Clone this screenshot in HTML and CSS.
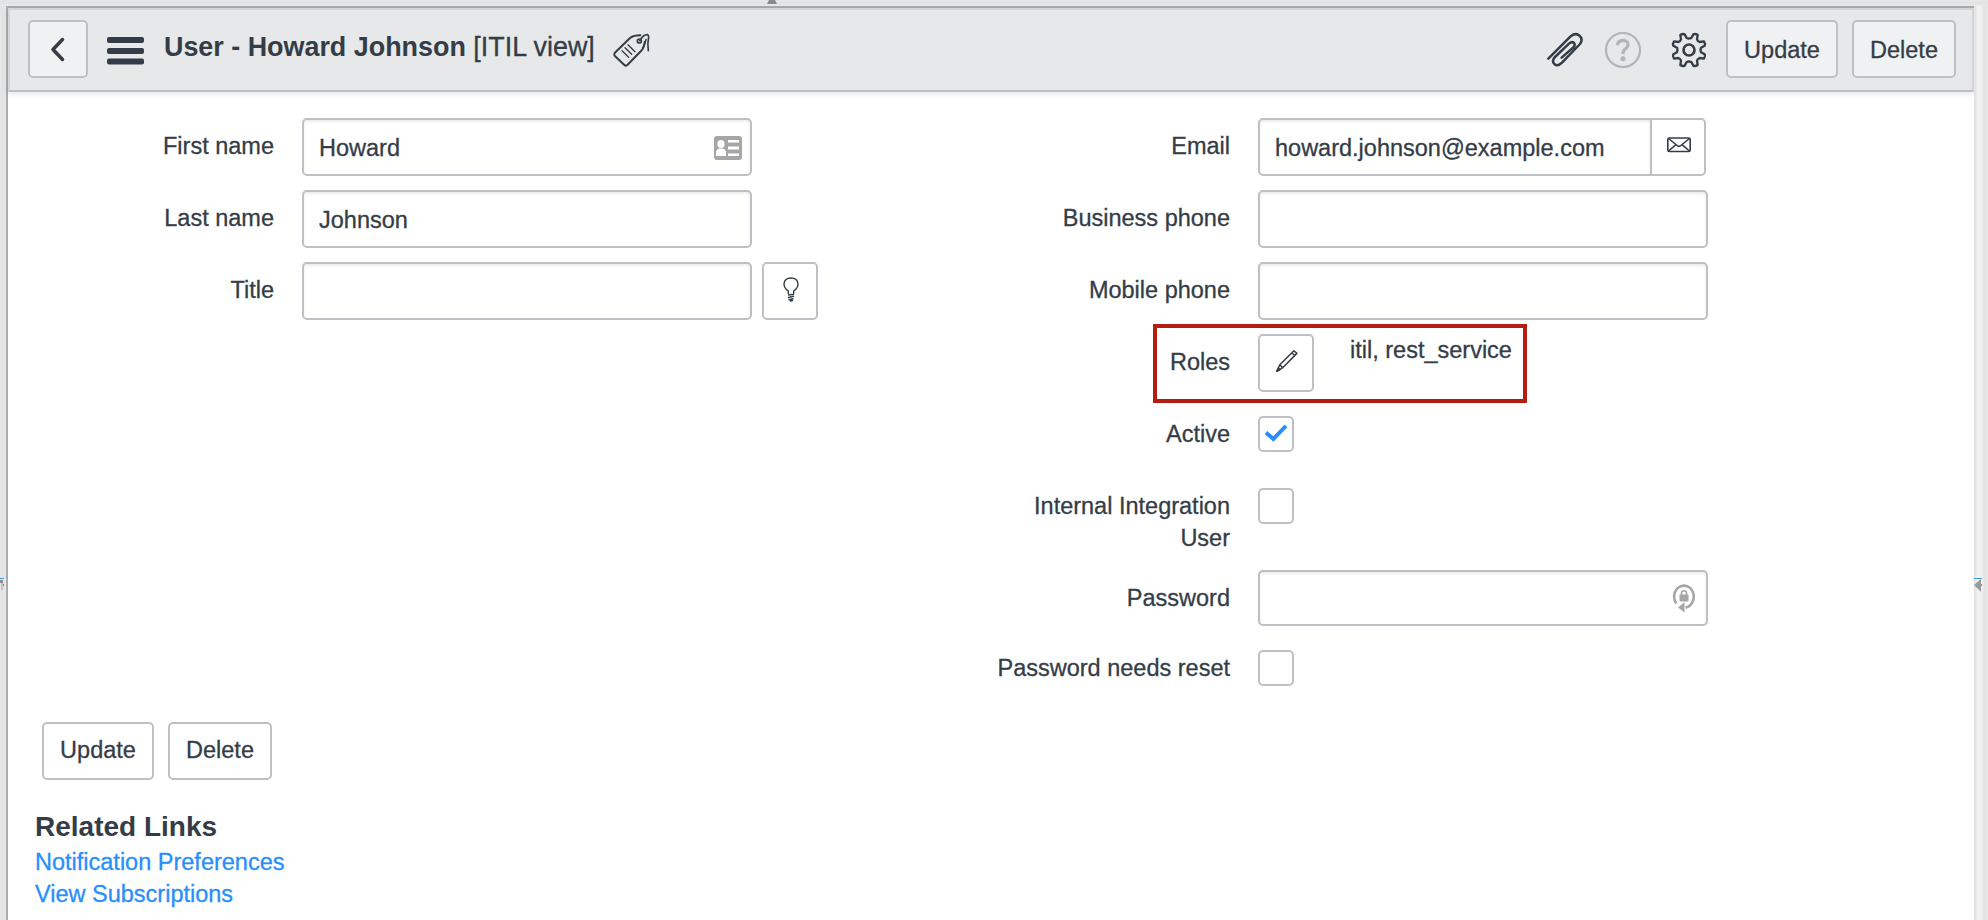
FILE: index.html
```html
<!DOCTYPE html>
<html lang="en">
<head>
<meta charset="utf-8">
<title>User - Howard Johnson</title>
<link rel="stylesheet" href="styles.css">
</head>
<body>
<div class="app">
  <div class="gutter-top"><svg class="handle-top" viewBox="0 0 10 4"><path d="M2 0h6l2 4H0z" fill="#8a8a8a"/></svg></div>
  <div class="middle">
    <div class="gutter-left"><svg class="handle-left" viewBox="0 0 4 14"><path d="M0 0h4v1H0z" fill="#3a9be0"/><path d="M0 2h3v3H0z" fill="#8f8f8f"/><path d="M1 5h2v7H1z" fill="#c2c2c2"/><path d="M3 6h1v2H3z" fill="#3a9be0"/></svg></div>
    <main class="frame">
      <header class="header">
        <button class="btn back" aria-label="Back"><svg width="16" height="26" viewBox="0 0 16 26"><path d="M12.5 3.500L3 13.500l9.500 10" fill="none" stroke="currentColor" stroke-width="3.500" stroke-linecap="round" stroke-linejoin="round"/></svg></button>
        <svg class="menu" width="37" height="28" viewBox="0 0 37 28"><rect width="37" height="6" rx="2"/><rect y="11" width="37" height="6" rx="2"/><rect y="21.500" width="37" height="6" rx="2"/></svg>
        <h1 class="title">User - Howard Johnson <span class="view">[ITIL view]</span></h1>
        <svg class="tag" width="40" height="36" viewBox="640 96 120 108" fill="none" stroke="currentColor" stroke-linecap="round" stroke-linejoin="round">
          <path stroke-width="6" d="M725 106C713 106 702 108 694 114L648 159Q645 163 648 167L677 195Q681 199 686 195L727 153Q736 145 738 126"/>
          <circle cx="722" cy="123" r="6" stroke-width="5"/>
          <path stroke-width="5" d="M723 122C730 111 739 103 746 104C756 107 745 124 748 138L749 152M742 119Q739 132 733 143"/>
          <path stroke-width="4" d="M670 152l20 20M679 143l20 20M688 134l21 21"/>
        </svg>
        <div class="actions">
          <svg class="clip" width="40" height="40" viewBox="135 88 120 120" fill="none" stroke="currentColor" stroke-width="7.500" stroke-linecap="round" stroke-linejoin="round"><path d="M145 174L211 108Q224 95 237 104Q251 115 240 130L186 186Q173 199 163 190Q154 180 165 169L207 129Q216 121 222 127Q227 133 220 140L185 171"/></svg>
          <svg class="help" width="40" height="40" viewBox="308 91 120 120"><circle cx="368" cy="151" r="51" fill="none" stroke="currentColor" stroke-width="6.500"/><path d="M351 137Q353 122 368 122Q384 123 383 136Q382 144 374 149Q368 153 368 163" fill="none" stroke="currentColor" stroke-width="9.500"/><circle cx="368" cy="177" r="7.500" fill="currentColor"/></svg>
          <svg class="gear" width="40" height="40" viewBox="-60 -60 120 120" fill="none" stroke="currentColor" stroke-width="7" stroke-linejoin="round"><circle r="16.500" stroke-width="8"/><path d="M-7 -36Q0 -33 7 -36L13 -47Q19 -50 26 -45L24 -32Q26 -26 32 -24L45 -26Q50 -19 47 -13L36 -7Q33 0 36 7L47 13Q50 19 45 26L32 24Q26 26 24 32L26 45Q19 50 13 47L7 36Q0 33 -7 36L-13 47Q-19 50 -26 45L-24 32Q-26 26 -32 24L-45 26Q-50 19 -47 13L-36 7Q-33 0 -36 -7L-47 -13Q-50 -19 -45 -26L-32 -24Q-26 -26 -24 -32L-26 -45Q-19 -50 -13 -47Z"/></svg>
          <button class="btn update">Update</button>
          <button class="btn delete">Delete</button>
        </div>
      </header>

      <section class="form">
        <div class="column">
          <div class="row"><label class="label">First name</label><div class="field"><input class="input" value="Howard">
            <svg class="input-icon" width="28" height="24" viewBox="0 0 28 24"><rect width="28" height="24" rx="3" fill="#a6a6a6"/><g fill="#fff"><ellipse cx="7" cy="8" rx="3.600" ry="4"/><path d="M2 20v-3q0-3.500 3-4.500h4q3 1 3 4.500v3zM14 4h11v2.500H14zM14 10.500h11v3H14zM14 17.500h11V20H14z"/></g></svg></div></div>
          <div class="row"><label class="label">Last name</label><div class="field"><input class="input" value="Johnson"></div></div>
          <div class="row"><label class="label">Title</label><div class="field"><input class="input"></div>
            <button class="btn square suggest" aria-label="Suggest"><svg width="16" height="25" viewBox="0 0 16 25" fill="none" stroke="currentColor" stroke-width="1.400" stroke-linecap="round" stroke-linejoin="round"><path d="M5.300 16.500V14Q1 11 1 7Q1.500 1 8 1Q14.500 1 15 7Q15 11 10.700 14V16.500M5.500 18l5-.7M5.500 20.500l5-1.200M6 22.700l4-1M7.500 24l2-.5"/></svg></button></div>
        </div>

        <div class="column">
          <div class="row"><label class="label">Email</label><div class="field group"><input class="input" value="howard.johnson@example.com"><button class="addon" aria-label="Send email"><svg width="24" height="16" viewBox="0 0 24 16" fill="none" stroke="currentColor" stroke-width="1.600" stroke-linejoin="round"><rect x=".8" y="1" width="22.400" height="13.500" rx="1.500"/><path d="M1.500 1.500L10.800 9Q12 9.700 13.200 9L22.500 1.500M1.500 14L9 7.700M22.500 14L15 7.700"/></svg></button></div></div>
          <div class="row"><label class="label">Business phone</label><div class="field"><input class="input"></div></div>
          <div class="row"><label class="label">Mobile phone</label><div class="field"><input class="input"></div></div>
          <div class="row roles"><label class="label">Roles</label><button class="btn square edit" aria-label="Edit roles"><svg width="24" height="24" viewBox="0 0 24 24" fill="none" stroke="currentColor" stroke-width="1.500" stroke-linejoin="round"><path d="M1.800 22.300L4.800 15.800L18.900 1.700L21.900 4.400L7.700 18.700ZM4.800 15.800L7.700 18.700M16.800 3.800L19.800 6.500"/><path d="M1.800 22.300L3.300 19L5 20.500Z" fill="currentColor"/></svg></button><span class="role-list">itil, rest_service</span><span class="highlight"></span></div>
          <div class="row"><label class="label">Active</label><span class="checkbox"><svg width="24" height="18" viewBox="0 0 24 18"><path d="M2 8.500L9.300 15L22 1.800" fill="none" stroke="#278efc" stroke-width="3.900"/></svg></span></div>
          <div class="row tall"><label class="label">Internal Integration User</label><span class="checkbox"></span></div>
          <div class="row short"><label class="label">Password</label><div class="field"><input class="input" type="password">
            <svg class="input-icon lock" width="24" height="30" viewBox="0 0 24 30"><path d="M4.300 20.500A9.800 11 0 1 1 13.500 24.500" fill="none" stroke="#a6a6a6" stroke-width="2.600"/><path d="M6 24.500L12.500 19V29.500Z" fill="#a6a6a6"/><rect x="7.500" y="11.500" width="9" height="7" rx=".8" fill="#a6a6a6"/><path d="M9.500 12V10Q9.500 7.700 12 7.700Q14.500 7.700 14.500 10V12" fill="none" stroke="#a6a6a6" stroke-width="1.600"/></svg></div></div>
          <div class="row"><label class="label">Password needs reset</label><span class="checkbox"></span></div>
        </div>
      </section>

      <div class="bottom-actions"><button class="btn update">Update</button><button class="btn delete">Delete</button></div>
      <section class="related">
        <h2 class="related-title">Related Links</h2>
        <a class="link" href="#">Notification Preferences</a>
        <a class="link" href="#">View Subscriptions</a>
      </section>
    </main>
    <div class="gutter-right"><svg class="handle-right" viewBox="0 0 8 14"><path d="M0 0h8v1H0z" fill="#3a9be0"/><path d="M0 7L7 1v13z" fill="#999"/><path d="M7 6h1v2H7z" fill="#3a9be0"/></svg></div>
  </div>
</div>
</body>
</html>
```
FILE: styles.css
```css
* { box-sizing: border-box; }

body {
  margin: 0;
  color: #343d47;
  background: #fff;
  font: 23.5px/32px "Liberation Sans", Arial, sans-serif;
  -webkit-text-stroke: .3px;
}

.app {
  display: flex;
  flex-direction: column;
  width: 1988px;
  height: 920px;
  overflow: hidden;
}

.gutter-top {
  height: 6px;
  flex: none;
  background: linear-gradient(#e7e7e7, #e2e2e2 50%, #ebebeb);
  padding-left: 767px;
}
.handle-top { display: block; width: 10px; height: 4px; }
.middle { display: flex; flex: 1; min-height: 0; }
.gutter-left {
  width: 6px;
  background: linear-gradient(90deg, #e8e8e8, #e2e2e2 50%, #ebebeb);
  padding-top: 572px;
}
.handle-left { display: block; width: 4px; height: 14px; }
.gutter-right {
  width: 14px;
  background: linear-gradient(90deg, #e4e4e4 0 2px, #f3f3f3 3px, #f0f0f0 8px, #e2e2e2 10px, #e8e8e8);
  padding-top: 572px;
}
.handle-right { display: block; width: 8px; height: 14px; }

.frame {
  width: 1968px;
  border: solid #a9abac;
  border-width: 2px 0 0 2px;
  background: #fff;
}

.header {
  display: flex;
  height: 84px;
  padding: 10px 16px 0 18px;
  border: 2px solid #d2d6da;
  border-bottom-color: #bcc0c5;
  background: #e6e8ea;
  box-shadow: 0 2px 6px rgba(0, 0, 0, .1);
}

.btn {
  display: flex;
  flex: none;
  align-items: center;
  justify-content: center;
  height: 58px;
  padding: 0;
  border: 2px solid #bdc0c4;
  border-radius: 5px;
  color: inherit;
  background: #fff;
  font: inherit;
}
.update { width: 112px; }
.delete { width: 104px; }
.square { width: 56px; }
.header .btn { background: #f0f1f3; }
.header .update, .header .delete { padding-top: 2px; }
.back { width: 60px; }
.menu { margin: 17px 0 0 19px; fill: #343d47; }

.title {
  margin: 11px 0 0 20px;
  font-size: 26.900px;
  line-height: 32px;
  white-space: nowrap;
  -webkit-text-stroke: 0;
}
.view { font-weight: 400; -webkit-text-stroke: .3px; }
.tag { margin: 12px 0 0 17px; }

.actions { display: flex; margin-left: auto; }
.clip, .help, .gear { margin-top: 10px; }
.help { margin-left: 18px; color: #afb5ba; }
.gear { margin-left: 26px; }
.actions .update { margin: 0 14px 0 17px; }

.form {
  display: grid;
  grid-template-columns: 956px 1fr;
  padding: 26px 0 0 28px;
  height: 630px;
}
.row { display: flex; position: relative; height: 72px; }
.tall { height: 92px; }
.short { height: 70px; }
.label {
  flex: none;
  width: 238px;
  padding-top: 12px;
  margin-right: 28px;
  text-align: right;
}

.field { position: relative; width: 450px; height: 58px; }
.short .field { height: 56px; }
.input {
  display: block;
  width: 100%;
  height: 100%;
  padding: 2px 15px 0;
  border: 2px solid #bdc0c4;
  border-radius: 5px;
  outline: 0;
  color: inherit;
  background: #fff;
  box-shadow: inset 0 2px 3px rgba(0, 0, 0, .08);
  font: inherit;
}
.input-icon { position: absolute; right: 10px; top: 18px; }
.lock { top: 13px; right: 12px; }

.group { display: flex; width: 448px; }
.group .input { width: 394px; border-radius: 5px 0 0 5px; }
.addon {
  display: flex;
  width: 54px;
  align-items: center;
  justify-content: center;
  padding: 0 0 4px 2px;
  border: 2px solid #bdc0c4;
  border-left: 0;
  border-radius: 0 5px 5px 0;
  color: inherit;
  background: #fff;
}

.suggest { margin-left: 10px; padding: 0 0 4px 2px; }
.edit { padding: 0 0 4px 2px; }
.role-list { margin-left: 36px; }
.highlight {
  position: absolute;
  left: 161px;
  top: -10px;
  width: 374px;
  height: 79px;
  border: 4px solid #b51c12;
}

.checkbox {
  display: flex;
  justify-content: center;
  width: 36px;
  height: 36px;
  margin-top: 10px;
  padding-top: 6px;
  border: 2px solid #bdc0c4;
  border-radius: 5px;
}

.bottom-actions { display: flex; gap: 14px; padding-left: 34px; height: 84px; }
.bottom-actions .btn { height: 58px; padding-bottom: 2px; }

.related { display: flex; flex-direction: column; align-items: flex-start; padding-left: 27px; }
.related-title { margin: 4px 0 2px; font-size: 28px; line-height: 34px; -webkit-text-stroke: 0; }
.link { color: #278efc; text-decoration: none; }
```
